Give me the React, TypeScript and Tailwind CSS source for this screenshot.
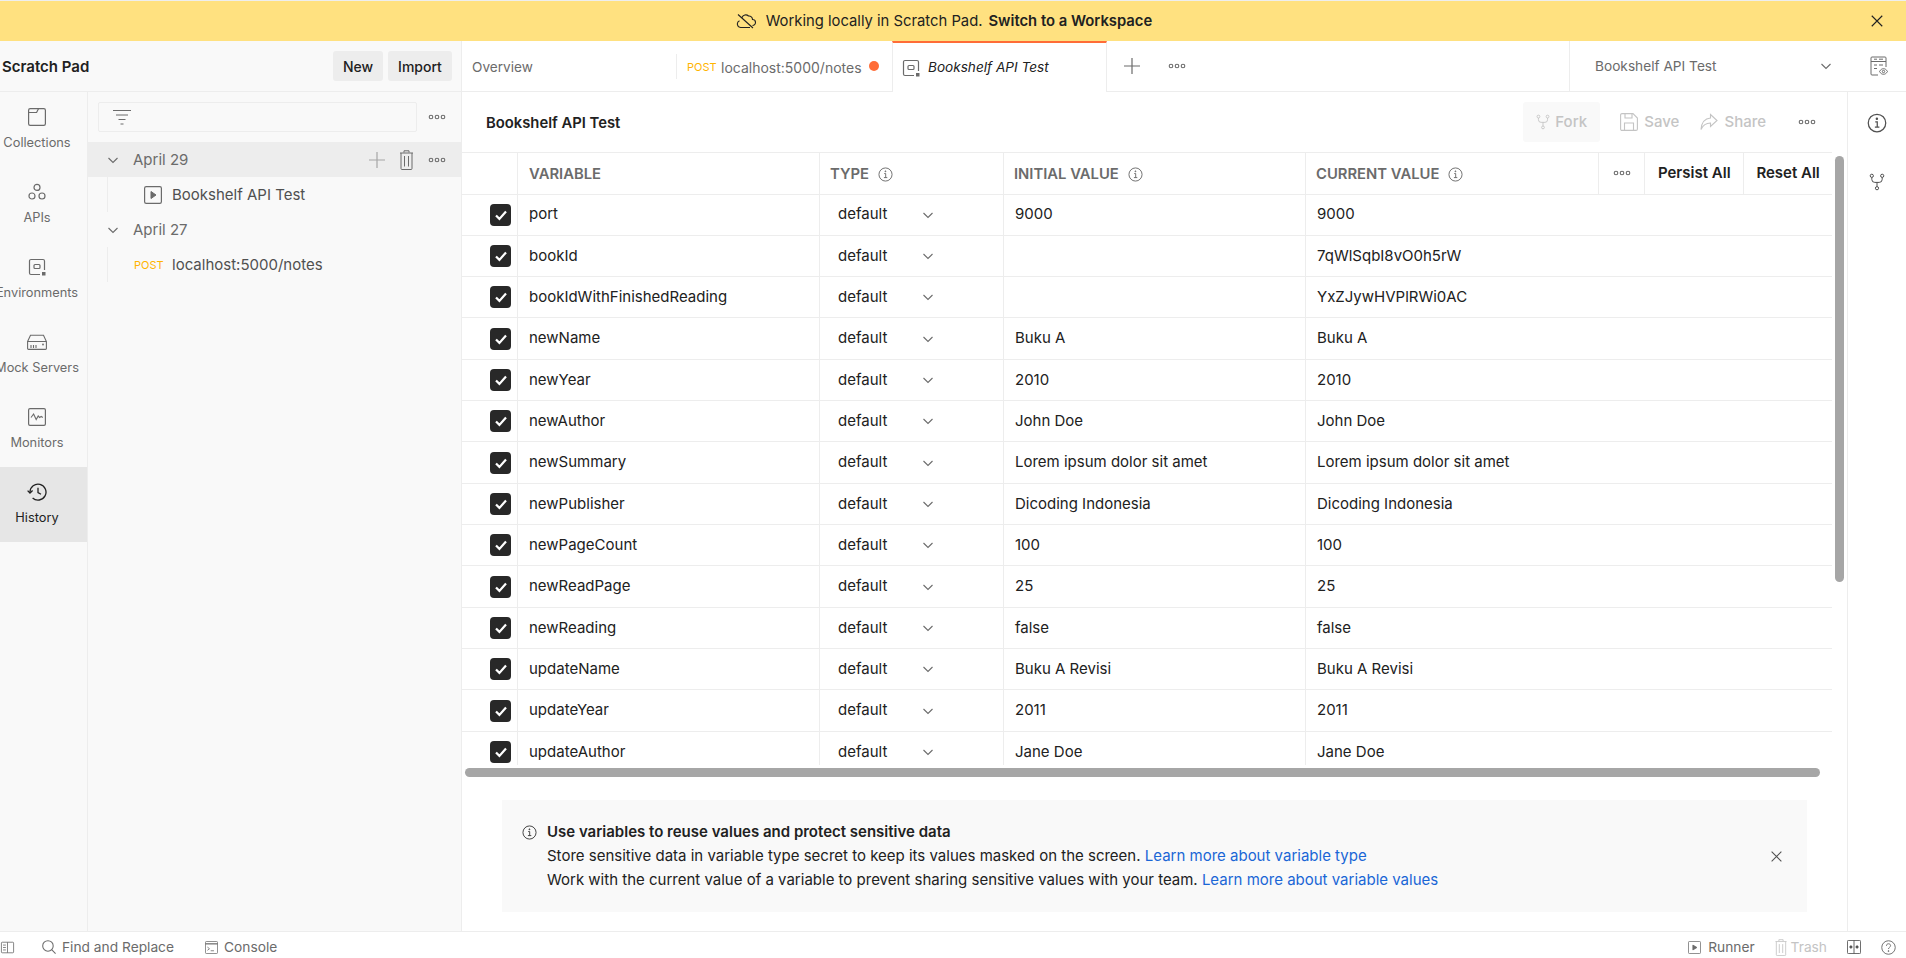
import type { ReactNode } from "react";

type IconProps = { className?: string };

function Svg({ className, children, view = "0 0 16 16" }: IconProps & { children: ReactNode; view?: string }) {
  return (
    <svg viewBox={view} fill="none" stroke="currentColor" strokeWidth="1" className={className}>
      {children}
    </svg>
  );
}

const Dots = ({ className = "w-[18px] h-[6px] text-[#6b6b6b]" }: IconProps) => (
  <Svg view="0 0 18 6" className={className}>
    <circle cx="3" cy="3" r="1.8" strokeWidth="1.1" />
    <circle cx="9" cy="3" r="1.8" strokeWidth="1.1" />
    <circle cx="15" cy="3" r="1.8" strokeWidth="1.1" />
  </Svg>
);

const Chevron = ({ className = "w-[12px] h-[12px] text-[#6b6b6b]" }: IconProps) => (
  <Svg view="0 0 12 12" className={className}>
    <path d="M1.5 4l4.5 4.5L10.5 4" strokeWidth="1.1" />
  </Svg>
);

const InfoIcon = ({ className = "w-[15px] h-[15px] text-[#6b6b6b]" }: IconProps) => (
  <Svg className={className}>
    <circle cx="8" cy="8" r="7" />
    <path d="M6.6 7h1.6v4.2M6.3 11.3h3.6" />
    <circle cx="7.9" cy="4.6" r=".5" fill="currentColor" />
  </Svg>
);

const Close = ({ className }: IconProps) => (
  <Svg className={className}>
    <path d="M2 2l12 12M14 2L2 14" strokeWidth="1.3" />
  </Svg>
);

const EnvIcon = ({ className }: IconProps) => (
  <Svg view="0 0 18 18" className={className}>
    <path d="M12 16.5H3a1.5 1.5 0 0 1-1.5-1.5V3A1.5 1.5 0 0 1 3 1.5h12A1.5 1.5 0 0 1 16.5 3v9" strokeWidth="1.2" />
    <rect x="6" y="6.5" width="6" height="4" rx="1" strokeWidth="1.2" />
    <rect x="14" y="14" width="3.5" height="3.5" fill="currentColor" stroke="none" />
  </Svg>
);

const ForkIcon = ({ className }: IconProps) => (
  <Svg view="0 0 16 18" className={className}>
    <circle cx="2.8" cy="2.8" r="1.6" />
    <circle cx="13.2" cy="2.8" r="1.6" />
    <circle cx="8" cy="15.2" r="1.6" />
    <path d="M2.8 4.4v2a3 3 0 0 0 3 3h4.4a3 3 0 0 0 3-3v-2M8 9.4v4.2" />
  </Svg>
);

function RailItem({ label, active, children }: { label: string; active?: boolean; children: ReactNode }) {
  return (
    <div className={`h-[75px] shrink-0 ${active ? "bg-[#e6e6e6] text-[#212121]" : "text-[#6b6b6b]"}`}>
      <div className="w-[74px] flex flex-col items-center pt-[15px] text-[12.8px] whitespace-nowrap">
        <div className="h-[20px] w-[20px] flex items-center justify-center">{children}</div>
        <span className="mt-[6px] leading-[20px]">{label}</span>
      </div>
    </div>
  );
}

function Sidebar() {
  return (
    <aside className="w-[462px] shrink-0 flex flex-col bg-[#f9f9f9] border-r border-[#ededed]">
      <div className="h-[51px] shrink-0 flex items-center border-b border-[#ededed] pl-[2px] pr-[9px]">
        <span className="font-semibold text-[15px] text-[#212121] pt-[2px]">Scratch Pad</span>
        <button className="ml-auto w-[50px] h-[30px] rounded-[3px] bg-[#ededed] text-[14px] font-medium text-[#212121]">
          New
        </button>
        <button className="ml-[5px] w-[64px] h-[30px] rounded-[3px] bg-[#ededed] text-[14px] font-medium text-[#212121]">
          Import
        </button>
      </div>
      <div className="flex-1 flex min-h-0">
        <nav className="w-[88px] shrink-0 border-r border-[#ededed] flex flex-col overflow-hidden">
          <RailItem label="Collections">
            <Svg view="0 0 18 18" className="w-[18px] h-[18px]">
              <rect x=".6" y=".6" width="16.8" height="16.8" rx="1.6" strokeWidth="1.2" />
              <path d="M.6 4.5h8l2-3.9" strokeWidth="1.2" />
            </Svg>
          </RailItem>
          <RailItem label="APIs">
            <Svg view="0 0 18 18" className="w-[18px] h-[18px]">
              <circle cx="9" cy="4.4" r="3" strokeWidth="1.2" />
              <circle cx="4" cy="13" r="3" strokeWidth="1.2" />
              <circle cx="14" cy="13" r="3" strokeWidth="1.2" />
            </Svg>
          </RailItem>
          <RailItem label="Environments">
            <EnvIcon className="w-[18px] h-[18px]" />
          </RailItem>
          <RailItem label="Mock Servers">
            <Svg view="0 0 20 16" className="w-[20px] h-[16px]">
              <path d="M.6 7.500L3.500 1.200h13l2.900 6.300v7a.9.9 0 0 1-.9.9h-17a.9.9 0 0 1-.9-.9z" strokeWidth="1.1" />
              <path d="M.6 7.500h18.800M4 11v3M6.500 11v3M9 11v3" strokeWidth="1.1" />
              <circle cx="16" cy="10.500" r=".9" fill="currentColor" stroke="none" />
            </Svg>
          </RailItem>
          <RailItem label="Monitors">
            <Svg view="0 0 18 18" className="w-[18px] h-[18px]">
              <rect x=".6" y=".6" width="16.8" height="16.8" rx="1.4" strokeWidth="1.2" />
              <path d="M3 9.500l2.600-3.500 2.600 5.500 2-3.500 1.400 1.500 1.600-1 1.600 1" strokeWidth="1.1" />
            </Svg>
          </RailItem>
          <RailItem label="History" active>
            <Svg view="0 0 20 18" className="w-[20px] h-[18px]">
              <path d="M3 9a8 8 0 1 1 2.600 6" strokeWidth="1.3" />
              <path d="M.6 7.600L3 10l2.600-2.400" strokeWidth="1.3" />
              <path d="M11 4.800V9.600l3 1.600" strokeWidth="1.3" />
            </Svg>
          </RailItem>
        </nav>
        <div className="flex-1 min-w-0 flex flex-col">
          <div className="h-[50px] shrink-0 flex items-center pl-[10px] pr-[15px]">
            <div className="w-[319px] h-[30px] border border-[#ededed] rounded-[2px] flex items-center pl-[14px]">
              <Svg view="0 0 18 16" className="w-[18px] h-[16px] text-[#6b6b6b]">
                <path d="M0 1.500h18M3 6h12M5.500 10.500h7M7.500 15h3" />
              </Svg>
            </div>
            <Dots className="ml-auto w-[18px] h-[6px] text-[#6b6b6b]" />
          </div>
          <div className="h-[35px] flex items-center bg-[#ededed] pl-[19px] pr-[15px] text-[#6b6b6b] text-[15px]">
            <Chevron />
            <span className="ml-[14px] pt-[2px]">April 29</span>
            <Svg className="ml-auto w-[16px] h-[16px] text-[#a6a6a6]">
              <path d="M8 0v16M0 8h16" strokeWidth="1.2" />
            </Svg>
            <Svg view="0 0 14 20" className="ml-[14px] w-[15px] h-[20px] text-[#6b6b6b]">
              <path d="M.5 3h13M4.500 2.500V.8h5v1.700M1.500 3v15.500a1 1 0 0 0 1 1h9a1 1 0 0 0 1-1V3M5 6v10.500M9 6v10.500" />
            </Svg>
            <Dots className="ml-[14px] w-[18px] h-[6px] text-[#6b6b6b]" />
          </div>
          <div className="h-[35px] flex items-center ml-[19px] border-l border-[#ededed] text-[15px] text-[#505050]">
            <Svg view="0 0 18 18" className="ml-[36px] w-[18px] h-[18px] text-[#6b6b6b]">
              <rect x=".6" y=".6" width="16.8" height="16.8" rx="1.6" strokeWidth="1.2" />
              <path d="M7 5.500l5 3.500-5 3.500z" fill="currentColor" />
            </Svg>
            <span className="ml-[10px] pt-[2px]">Bookshelf API Test</span>
          </div>
          <div className="h-[35px] flex items-center pl-[19px] text-[15px] text-[#6b6b6b]">
            <Chevron />
            <span className="ml-[14px] pt-[2px]">April 27</span>
          </div>
          <div className="h-[35px] flex items-center ml-[19px] border-l border-[#ededed] text-[15px] text-[#505050]">
            <span className="ml-[26px] w-[38px] text-[11px] text-[#ffb400] pt-[2px]">POST</span>
            <span className="pt-[2px]">localhost:5000/notes</span>
          </div>
        </div>
      </div>
    </aside>
  );
}

function TabBar() {
  return (
    <div className="h-[51px] shrink-0 flex border-b border-[#ededed] text-[14px]">
      <div className="w-[215px] flex items-center pl-[10px] text-[#6b6b6b]">
        <span className="text-[13.600px] pt-[2px]">Overview</span>
        <span className="ml-auto h-[25px] border-r border-[#ededed]" />
      </div>
      <div className="w-[215px] flex items-center pl-[10px] text-[#6b6b6b]">
        <span className="text-[11px] text-[#ffb400] w-[34px] pt-[2px]">POST</span>
        <span className="pt-[2px]">localhost:5000/notes</span>
        <span className="ml-[7px] w-[10px] h-[10px] rounded-full bg-[#ff6c37]" />
      </div>
      <div className="w-[215px] h-[51px] flex items-center pl-[9px] bg-white border-x border-[#ededed] border-t-2 border-t-[#ff6c37] z-10 text-[#212121] italic text-[13.600px]">
        <EnvIcon className="w-[18px] h-[18px] text-[#6b6b6b]" />
        <span className="ml-[8px]">Bookshelf API Test</span>
      </div>
      <div className="flex items-center pl-[17px]">
        <Svg className="w-[16px] h-[16px] text-[#6b6b6b]">
          <path d="M8 0v16M0 8h16" strokeWidth="1.2" />
        </Svg>
        <Dots className="ml-[28px] w-[18px] h-[6px] text-[#6b6b6b]" />
      </div>
      <div className="ml-auto w-[337px] flex items-center border-l border-[#ededed] pl-[25px] text-[#6b6b6b] text-[13.700px]">
        <span>Bookshelf API Test</span>
        <Chevron className="ml-[103px] w-[12px] h-[12px] text-[#6b6b6b]" />
        <Svg view="0 0 18 20" className="ml-[38px] w-[18px] h-[20px] text-[#6b6b6b]">
          <path d="M8 19H2a1 1 0 0 1-1-1V2a1 1 0 0 1 1-1h13a1 1 0 0 1 1 1v9" />
          <path d="M1 5.500h15M4 9h3M9 9h4M4 12.500h3M4 3.200h3M9 3.200h4" />
          <path d="M9.500 15.500c1.200-2 2.500-2.800 4-2.800s2.800.8 4 2.800c-1.200 2-2.500 2.800-4 2.800s-2.800-.8-4-2.800z" />
          <circle cx="13.500" cy="15.500" r="1.200" />
        </Svg>
      </div>
    </div>
  );
}

const rows: [string, string, string][] = [
  ["port", "9000", "9000"],
  ["bookId", "", "7qWlSqbI8vO0h5rW"],
  ["bookIdWithFinishedReading", "", "YxZJywHVPlRWi0AC"],
  ["newName", "Buku A", "Buku A"],
  ["newYear", "2010", "2010"],
  ["newAuthor", "John Doe", "John Doe"],
  ["newSummary", "Lorem ipsum dolor sit amet", "Lorem ipsum dolor sit amet"],
  ["newPublisher", "Dicoding Indonesia", "Dicoding Indonesia"],
  ["newPageCount", "100", "100"],
  ["newReadPage", "25", "25"],
  ["newReading", "false", "false"],
  ["updateName", "Buku A Revisi", "Buku A Revisi"],
  ["updateYear", "2011", "2011"],
  ["updateAuthor", "Jane Doe", "Jane Doe"],
];

function Table() {
  return (
    <div className="relative h-[626px] shrink-0">
      <div className="h-[613px] overflow-hidden border-t border-[#ededed] w-[1370px]">
        <div className="h-[41.500px] grid grid-cols-[55px_302px_184px_302px_527px] border-b border-[#ededed] text-[14.800px] font-semibold text-[#6b6b6b]">
          <div />
          <div className="border-l border-[#ededed] flex items-center pl-[11px] pt-[2px]">VARIABLE</div>
          <div className="border-l border-[#ededed] flex items-center pl-[10px] gap-[9px] pt-[2px]">
            TYPE <InfoIcon />
          </div>
          <div className="border-l border-[#ededed] flex items-center pl-[10px] gap-[9px] pt-[2px]">
            INITIAL VALUE <InfoIcon />
          </div>
          <div className="border-l border-[#ededed] flex">
            <div className="w-[293px] flex items-center pl-[10px] gap-[9px] pt-[2px]">
              CURRENT VALUE <InfoIcon />
            </div>
            <div className="w-[46px] border-l border-[#ededed] flex items-center justify-center">
              <Dots />
            </div>
            <div className="w-[99px] border-l border-[#ededed] flex items-center justify-center text-[#212121] text-[15px]">
              Persist All
            </div>
            <div className="w-[89px] border-l border-[#ededed] flex items-center justify-center text-[#212121] text-[15px]">
              Reset All
            </div>
          </div>
        </div>
        {rows.map(([name, initial, current]) => (
          <div
            key={name}
            className="h-[41.330px] grid grid-cols-[55px_302px_184px_302px_527px] border-b border-[#ededed] text-[15px] text-[#212121]"
          >
            <div className="flex items-center pl-[28px]">
              <span className="w-[21px] h-[22px] rounded-[4px] bg-[#282828] flex items-center justify-center">
                <Svg view="0 0 14 14" className="w-[14px] h-[14px] text-white">
                  <path d="M2 7.500l3.400 3.400L12 3.400" strokeWidth="2.200" />
                </Svg>
              </span>
            </div>
            <div className="border-l border-[#ededed] flex items-center pl-[11px]">{name}</div>
            <div className="border-l border-[#ededed] flex items-center pl-[18px]">
              <span className="w-[84px]">default</span>
              <Chevron />
            </div>
            <div className="border-l border-[#ededed] flex items-center pl-[11px]">{initial}</div>
            <div className="border-l border-[#ededed] flex items-center pl-[11px]">{current}</div>
          </div>
        ))}
      </div>
      <div className="absolute left-[3px] top-[616px] w-[1355px] h-[9px] rounded-full bg-[#a6a6a6]" />
      <div className="absolute left-[1373px] top-[4px] w-[9px] h-[426px] rounded-full bg-[#a6a6a6]" />
    </div>
  );
}

function Content() {
  const disabled = "text-[#c4c4c4] font-medium text-[15px]";
  return (
    <div className="flex-1 min-h-0 flex">
      <main className="w-[1385px] shrink-0 flex flex-col">
        <div className="h-[60px] shrink-0 flex items-center pl-[24px] pr-[31px]">
          <span className="font-semibold text-[14.800px] text-[#212121] pt-[2px]">Bookshelf API Test</span>
          <div className={`ml-auto w-[77px] h-[40px] rounded-[3px] bg-[#f9f9f9] flex items-center pl-[13px] ${disabled}`}>
            <ForkIcon className="w-[14px] h-[16px]" />
            <span className="ml-[5px]">Fork</span>
          </div>
          <div className={`ml-[20px] flex items-center ${disabled}`}>
            <Svg view="0 0 18 18" className="w-[18px] h-[18px]">
              <path d="M2 .6h11l4.400 4.400v11a1.400 1.400 0 0 1-1.400 1.400H2A1.400 1.400 0 0 1 .6 16V2A1.400 1.400 0 0 1 2 .6z" strokeWidth="1.1" />
              <path d="M5 .6V5h7V.6M4.500 17.400V10h9v7.400" strokeWidth="1.1" />
            </Svg>
            <span className="ml-[6px]">Save</span>
          </div>
          <div className={`ml-[21px] flex items-center ${disabled}`}>
            <Svg view="0 0 18 18" className="w-[18px] h-[18px]">
              <path d="M10.500 1.500L17 7.500l-6.500 6V10C6 10 3 12 1 16.500 1.500 10 5 5.500 10.500 5z" strokeWidth="1.1" />
            </Svg>
            <span className="ml-[6px]">Share</span>
          </div>
          <Dots className="ml-[32px] w-[18px] h-[6px] text-[#6b6b6b]" />
        </div>
        <Table />
        <div className="mt-[22px] mx-[40px] h-[112px] bg-[#f9f9f9] flex items-center pl-[20px] pr-[24px] text-[15px] leading-[24px] text-[#212121]">
          <div className="flex-1 grid grid-cols-[25px_1fr]">
            <InfoIcon className="w-[15px] h-[15px] text-[#3a3a3a] self-center" />
            <div className="font-semibold">Use variables to reuse values and protect sensitive data</div>
            <div />
            <div>
              Store sensitive data in variable type secret to keep its values masked on the screen.{" "}
              <span className="text-[#1a66d6]">Learn more about variable type</span>
            </div>
            <div />
            <div>
              Work with the current value of a variable to prevent sharing sensitive values with your team.{" "}
              <span className="text-[#1a66d6]">Learn more about variable values</span>
            </div>
          </div>
          <Close className="w-[13px] h-[13px] text-[#505050]" />
        </div>
      </main>
      <div className="flex-1 border-l border-[#ededed] flex flex-col items-center pt-[21px] gap-[40px] text-[#505050]">
        <InfoIcon className="w-[20px] h-[20px] text-[#505050]" />
        <ForkIcon className="w-[16px] h-[18px] text-[#505050]" />
      </div>
    </div>
  );
}

function StatusBar() {
  return (
    <footer className="h-[27px] shrink-0 flex items-center pt-[4px] border-t border-[#ededed] text-[13.750px] text-[#6b6b6b]">
      <Svg className="w-[15px] h-[13px]">
        <rect x=".5" y="1.500" width="15" height="13" rx="1" />
        <path d="M8 1.500v13M2.500 5H6M2.500 8H6M2.500 11H6" />
      </Svg>
      <Svg className="ml-[27px] w-[14px] h-[14px]">
        <circle cx="6.800" cy="6.800" r="6" strokeWidth="1.2" />
        <path d="M11 11l4.500 4.500" strokeWidth="1.2" />
      </Svg>
      <span className="ml-[6px]">Find and Replace</span>
      <Svg className="ml-[31px] w-[13px] h-[13px]">
        <rect x=".5" y=".5" width="15" height="15" rx="1.5" />
        <path d="M.5 3.500h15" strokeWidth="1.5" />
        <path d="M3 7.500l2.500 2-2.500 2M7 12h4" />
      </Svg>
      <span className="ml-[6px]">Console</span>
      <Svg className="ml-auto w-[13px] h-[13px]">
        <rect x=".5" y=".5" width="15" height="15" rx="1.5" />
        <path d="M6 5l5 3-5 3z" fill="currentColor" />
      </Svg>
      <span className="ml-[7px]">Runner</span>
      <span className="ml-[20px] flex items-center text-[#c4c4c4]">
        <Svg view="0 0 14 20" className="w-[12px] h-[17px]">
          <path d="M.5 3h13M4.500 2.500V.8h5v1.700M1.500 3v15.500a1 1 0 0 0 1 1h9a1 1 0 0 0 1-1V3M5 6v10.500M9 6v10.500" />
        </Svg>
        <span className="ml-[4px]">Trash</span>
      </span>
      <Svg className="ml-[20px] w-[14px] h-[14px] text-[#505050]">
        <rect x=".5" y=".5" width="15" height="15" rx="1" />
        <path d="M8 .5v15" />
        <circle cx="4.500" cy="8" r="1.300" fill="currentColor" />
        <circle cx="11.500" cy="8" r="1.300" fill="currentColor" />
      </Svg>
      <Svg className="ml-[20px] mr-[10px] w-[15px] h-[15px]">
        <circle cx="8" cy="8" r="7.200" />
        <path d="M5.800 6.200c0-1.400 1-2.200 2.200-2.200s2.200.8 2.200 2c0 1.800-2.200 1.800-2.200 3.600" />
        <circle cx="8" cy="11.800" r=".5" fill="currentColor" />
      </Svg>
    </footer>
  );
}

export default function App() {
  return (
    <div className="h-screen w-full overflow-hidden flex flex-col bg-white font-[Inter,sans-serif] border-t border-[#eeeeee]">
      <div className="h-[40px] shrink-0 flex items-center bg-[#ffe180] text-[14.800px] text-[#212121]">
        <div className="flex-1 flex items-center justify-center pl-[40px]">
          <Svg view="0 0 20 16" className="w-[20px] h-[16px]">
            <path d="M6 4.500A4 4 0 0 1 12.500 3a3.500 3.500 0 0 1 4 3.500A3 3 0 0 1 16.500 12.500M14 14.500H4.500A3.500 3.500 0 0 1 3.500 7.800M2 1.500L17 15" strokeWidth="1.1" />
          </Svg>
          <span className="ml-[10px]">Working locally in Scratch Pad.</span>
          <span className="ml-[6px] font-semibold">Switch to a Workspace</span>
        </div>
        <div className="w-[58px] flex justify-center">
          <Close className="w-[14px] h-[14px]" />
        </div>
      </div>
      <div className="flex-1 min-h-0 flex">
        <Sidebar />
        <div className="flex-1 min-w-0 flex flex-col">
          <TabBar />
          <Content />
        </div>
      </div>
      <StatusBar />
    </div>
  );
}
